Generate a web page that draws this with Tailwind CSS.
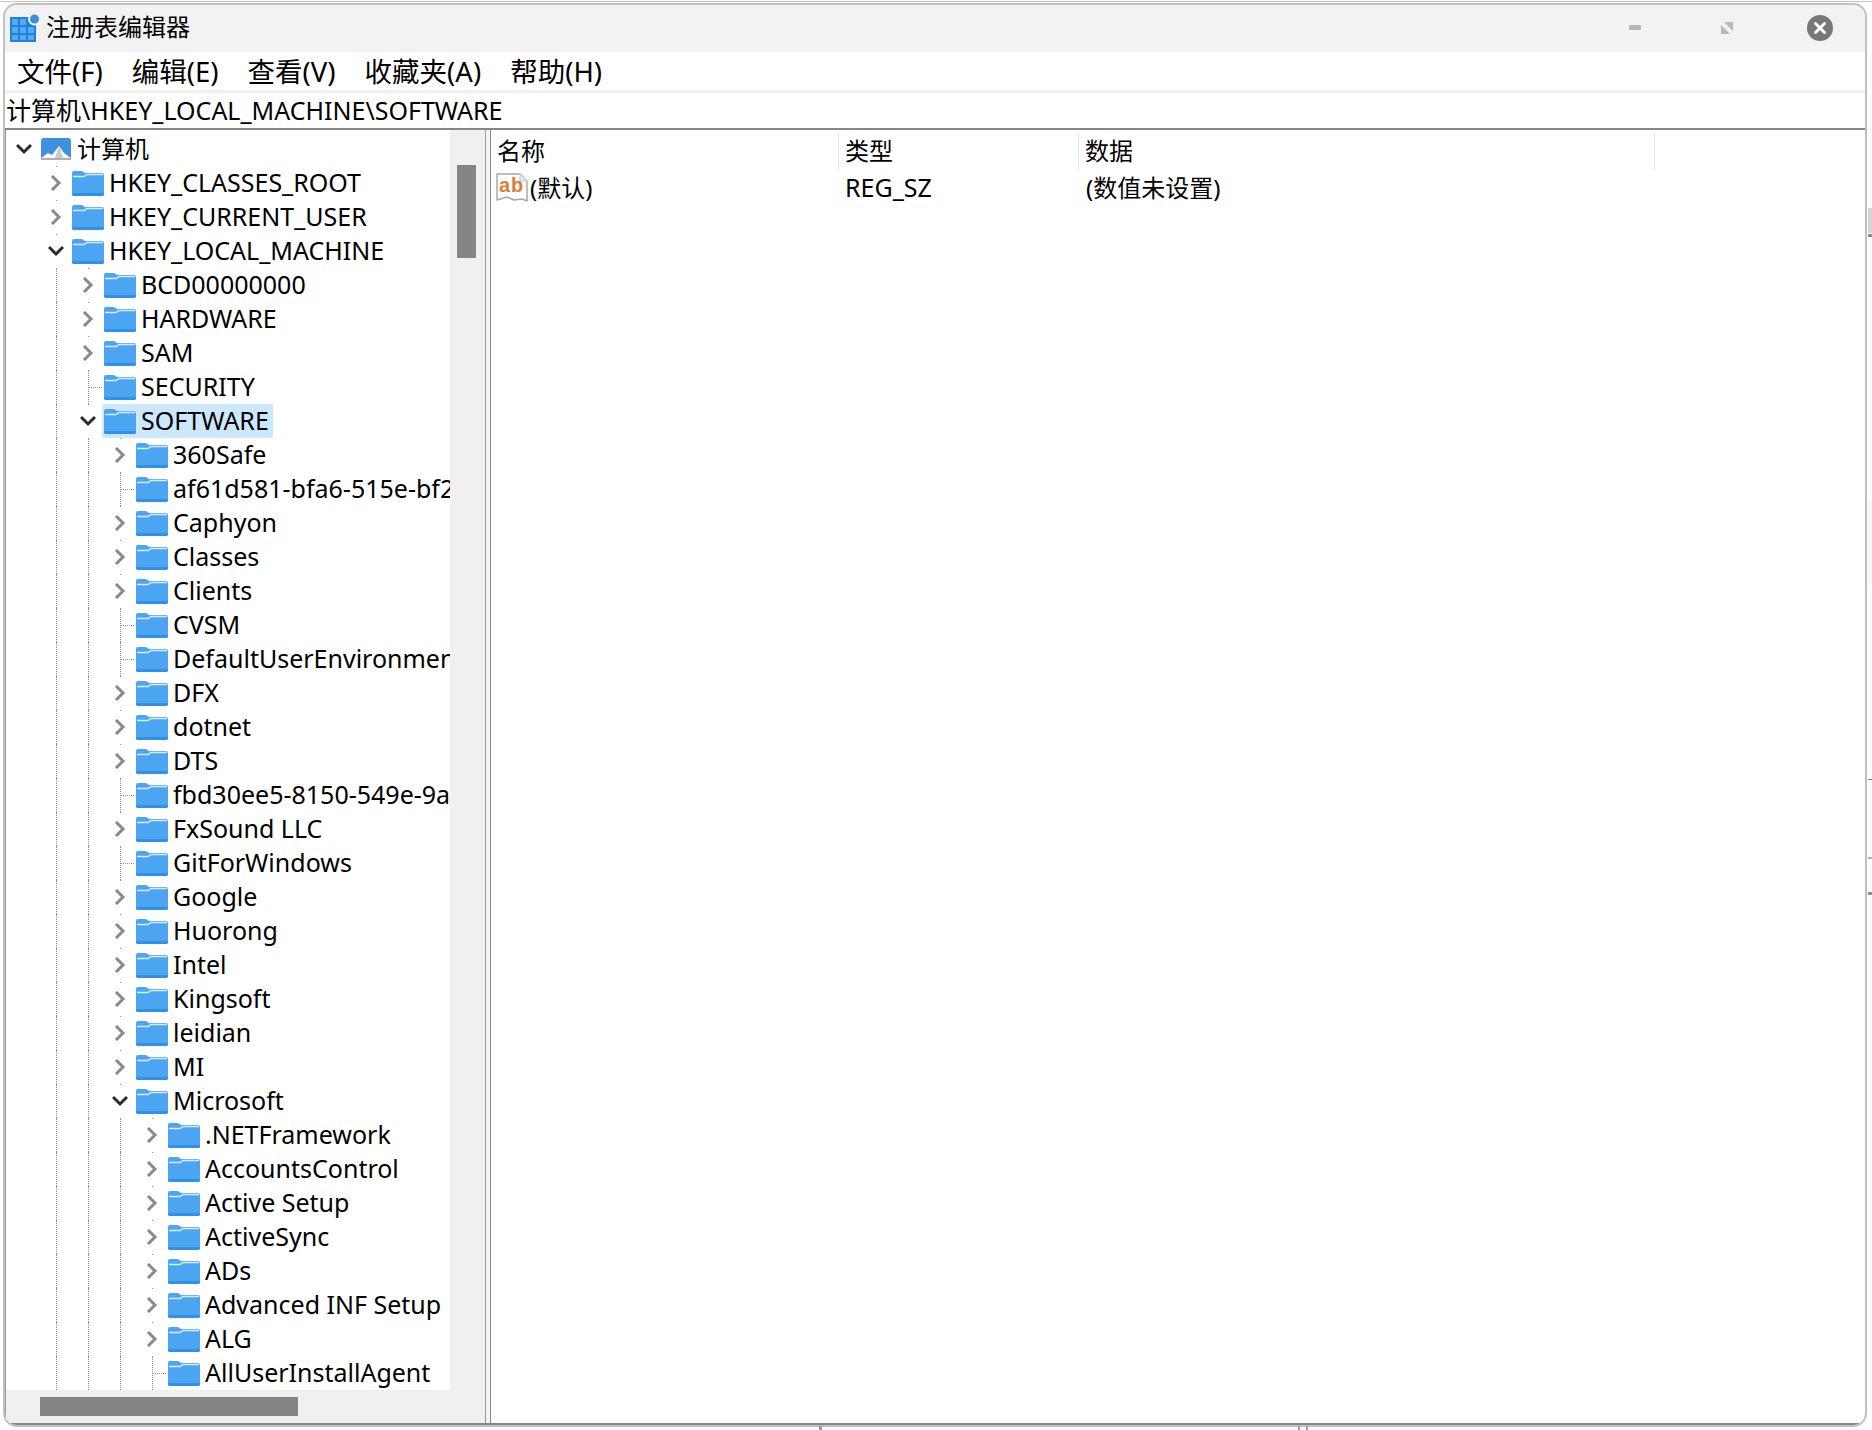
<!DOCTYPE html>
<html lang="zh-CN">
<head>
    <meta charset="UTF-8">
    <title>注册表编辑器</title>
    <script src="https://cdn.jsdelivr.net/npm/@tailwindcss/browser@4"></script>
</head>
<body class="bg-white">
    <svg class="hidden">
        <symbol id="folder" viewBox="0 0 32 26">
            <path d="M0 3a2 2 0 0 1 2-2h8l3 2h17a2 2 0 0 1 2 2v19a2 2 0 0 1-2 2H2a2 2 0 0 1-2-2z" fill="#4ba5f0"/>
            <path d="M0 24v-1h32v1a2 2 0 0 1-2 2H2a2 2 0 0 1-2-2z" fill="#2f90e6"/>
            <path d="M1 6.500h11l3-2h16" fill="none" stroke="#d9ecfb" stroke-width="1.500"/>
        </symbol>
        <symbol id="more" viewBox="0 0 16 16">
            <path d="M4 1l7 7-7 7" fill="none" stroke="#8a8a8a" stroke-width="3"/>
        </symbol>
        <symbol id="less" viewBox="0 0 16 16">
            <path d="M1 4l7 7 7-7" fill="none" stroke="#2b2b2b" stroke-width="3"/>
        </symbol>
    </svg>

    <div class="relative w-[1872px] h-[1430px] overflow-hidden font-['Noto_Sans','Noto_Sans_CJK_SC',sans-serif] text-[25px] text-black">
        <div class="h-[2px] border-b border-[#c4c4c4]"></div>
        <div class="ml-[3px] mt-[1px] w-[1864px] h-[1424px] flex flex-col border-2 border-[#c0c0c0] rounded-[14px] overflow-hidden bg-white">
            <!-- title bar -->
            <div class="h-[47px] shrink-0 flex items-center bg-[#f2f2f2] pl-[4px]">
                <svg class="w-[30px] h-[28px] -mt-[2px]" viewBox="0 0 30 28">
                    <rect x="1" y="3" width="26" height="25" fill="#1f83dc"/>
                    <path d="M3 5h6v6H3zM11 5h6v6h-6zM3 13h6v6H3zM11 13h6v6h-6zM19 13h6v6h-6zM3 21h6v5H3zM11 21h6v5h-6zM19 21h6v5h-6z" fill="#54abf0"/>
                    <circle cx="25.500" cy="5" r="6.500" fill="#f2f2f2"/>
                    <circle cx="25.500" cy="5" r="4.500" fill="#3b8fd8"/>
                </svg>
                <span class="ml-[7px] text-[24px] -mt-[3px]">注册表编辑器</span>
                <div class="ml-auto flex items-center -mt-[2px]">
                    <div class="w-[12px] h-[5px] bg-[#b5b5b5] rounded-[1px]"></div>
                    <svg class="ml-[80px] w-[12px] h-[12px]" viewBox="0 0 12 12"><path d="M3 0h9v9zM0 3l9 9H0z" fill="#b8b8b8"/></svg>
                    <svg class="ml-[74px] mr-[32px] w-[26px] h-[26px]" viewBox="0 0 26 26">
                        <circle cx="13" cy="13" r="13" fill="#787878"/>
                        <path d="M8.500 8.500l9 9M17.500 8.500l-9 9" stroke="#fff" stroke-width="3" stroke-linecap="round"/>
                    </svg>
                </div>
            </div>
            <!-- menu -->
            <div class="h-[38px] shrink-0 flex items-center pl-[12px] gap-[29px] text-[27.500px] pt-[1px]">
                <span>文件(F)</span><span>编辑(E)</span><span>查看(V)</span><span>收藏夹(A)</span><span>帮助(H)</span>
            </div>
            <div class="h-[3px] shrink-0 bg-[#f0f0f0]"></div>
            <!-- address -->
            <div class="h-[35px] shrink-0 flex items-center pl-[1px]"><span class="text-[25px]">计算机</span><span class="text-[25px]">\HKEY_LOCAL_MACHINE\SOFTWARE</span></div>
            <div class="h-[2px] shrink-0 bg-[#868686]"></div>
            <!-- panes -->
            <div class="flex-1 min-h-0 flex border-b-2 border-[#868686]">
                <div class="w-[481px] shrink-0 flex flex-col border-x border-x-[#9a9a9a]">
                    <div class="flex-1 min-h-0 flex">
                        <div id="tree" class="w-[444px] overflow-hidden pt-[2px]"></div>
                        <div class="flex-1 bg-[#f0f0f0] pt-[35px] pl-[7px]">
                            <div class="w-[19px] h-[93px] bg-[#858585]"></div>
                        </div>
                    </div>
                    <div class="h-[33px] shrink-0 bg-[#f0f0f0] pl-[34px] pt-[7px]">
                        <div class="w-[258px] h-[19px] bg-[#858585]"></div>
                    </div>
                </div>
                <div class="w-[4px] shrink-0 bg-[#f4f4f4]"></div>
                <div class="flex-1 border-l border-[#8a8a8a] flex flex-col text-[24px]">
                    <div class="h-[40px] shrink-0 flex pt-[2px]">
                        <div class="w-[348px] flex items-center pl-[6px] border-r border-[#e3e3e3]">名称</div>
                        <div class="w-[240px] flex items-center pl-[6px] border-r border-[#e3e3e3]">类型</div>
                        <div class="w-[576px] flex items-center pl-[6px] border-r border-[#e3e3e3]">数据</div>
                    </div>
                    <div class="h-[34px] flex items-center pt-[2px]">
                        <div class="w-[348px] flex items-center pl-[5px]">
                            <svg class="w-[32px] h-[30px] shrink-0" viewBox="0 0 32 30">
                                <path d="M1 1h23l7 7v20l-5-2-8 1-7-3-10 3z" fill="#fff" stroke="#a8a8a8" stroke-width="1.500" stroke-linejoin="round"/>
                                <path d="M24 1v7h7" fill="#e8e8e8" stroke="#c8c8c8"/>
                                <text x="3" y="19" font-family="Liberation Sans" font-size="20" font-weight="700" fill="#d8803a" letter-spacing="1">ab</text>
                            </svg>
                            <span class="ml-[2px]">(默认)</span>
                        </div>
                        <div class="w-[240px] pl-[6px] text-[25px]">REG_SZ</div>
                        <div class="pl-[7px]">(数值未设置)</div>
                    </div>
                </div>
            </div>
        </div>
        <!-- bits of the windows behind -->
        <div class="absolute left-[1868px] top-[208px] w-[4px] h-[25px] bg-[#d4d4d4]"></div>
        <div class="absolute left-[1868px] top-[234px] w-[4px] h-[3px] bg-[#8c8c8c]"></div>
        <div class="absolute left-[1868px] top-[500px] w-[4px] h-[85px] bg-[#f6f6f6]"></div>
        <div class="absolute left-[1868px] top-[779px] w-[4px] h-[1px] bg-[#4a86c0]"></div>
        <div class="absolute left-[1868px] top-[857px] w-[4px] h-[2px] bg-[#b0b0b0]"></div>
        <div class="absolute left-[1868px] top-[892px] w-[4px] h-[3px] bg-[#8c8c8c]"></div>
        <div class="absolute left-[819px] top-[1426px] w-[3px] h-[4px] bg-[#9a9a9a]"></div>
        <div class="absolute left-[1298px] top-[1426px] w-[2px] h-[4px] bg-[#9a9a9a]"></div>
        <div class="absolute left-[1306px] top-[1426px] w-[2px] h-[4px] bg-[#9a9a9a]"></div>
    </div>

    <script>
    // name, level, state: o = expanded, c = collapsed, l = leaf
    const rows = [
        ['计算机', 0, 'o'],
        ['HKEY_CLASSES_ROOT', 1, 'c'], ['HKEY_CURRENT_USER', 1, 'c'], ['HKEY_LOCAL_MACHINE', 1, 'o'],
        ['BCD00000000', 2, 'c'], ['HARDWARE', 2, 'c'], ['SAM', 2, 'c'], ['SECURITY', 2, 'l'], ['SOFTWARE', 2, 'o'],
        ['360Safe', 3, 'c'], ['af61d581-bfa6-515e-bf2b-4a1c9d3e7f10', 3, 'l'], ['Caphyon', 3, 'c'], ['Classes', 3, 'c'],
        ['Clients', 3, 'c'], ['CVSM', 3, 'l'], ['DefaultUserEnvironment', 3, 'l'], ['DFX', 3, 'c'], ['dotnet', 3, 'c'],
        ['DTS', 3, 'c'], ['fbd30ee5-8150-549e-9a3c-6d2e1f0b7a42', 3, 'l'], ['FxSound LLC', 3, 'c'], ['GitForWindows', 3, 'l'],
        ['Google', 3, 'c'], ['Huorong', 3, 'c'], ['Intel', 3, 'c'], ['Kingsoft', 3, 'c'], ['leidian', 3, 'c'], ['MI', 3, 'c'],
        ['Microsoft', 3, 'o'],
        ['.NETFramework', 4, 'c'], ['AccountsControl', 4, 'c'], ['Active Setup', 4, 'c'], ['ActiveSync', 4, 'c'], ['ADs', 4, 'c'],
        ['Advanced INF Setup', 4, 'c'], ['ALG', 4, 'c'], ['AllUserInstallAgent', 4, 'l']
    ];

    const tree = document.getElementById('tree');
    rows.forEach(([name, level, state]) => {
        const row = document.createElement('div');
        row.className = 'relative h-[34px] flex items-center whitespace-nowrap';
        const chevronLeft = 10 + 32 * level;
        let html = '';

        // guide lines of the ancestors that go on below this row
        for (let g = 1; g < level; g++) {
            html += `<span class="absolute top-0 h-[34px] border-l border-dotted border-[#8f8f8f]" style="left:${18 + 32 * g}px"></span>`;
        }
        if (level > 0) {
            const x = 18 + 32 * level;
            if (state === 'l') {
                html += `<span class="absolute top-0 h-[34px] border-l border-dotted border-[#8f8f8f]" style="left:${x}px"></span>`;
                html += `<span class="absolute top-[17px] w-[14px] border-t border-dotted border-[#8f8f8f]" style="left:${x}px"></span>`;
            } else {
                html += `<span class="absolute top-0 w-[1px] h-[1px] bg-[#8f8f8f]" style="left:${x}px"></span>`;
            }
        }

        html += `<span class="absolute w-[16px] h-[16px]" style="left:${chevronLeft}px">`;
        if (state !== 'l') html += `<svg class="w-[16px] h-[16px]"><use href="#${state === 'o' ? 'less' : 'more'}"/></svg>`;
        html += '</span>';

        const iconLeft = 34 + 32 * level;
        if (level === 0) {
            html += `<svg class="absolute w-[30px] h-[22px] left-[35px]" viewBox="0 0 30 22">
                <path d="M0 20V3a3 3 0 0 1 3-3h24a3 3 0 0 1 3 3v17z" fill="#3e90e0"/>
                <path d="M0 20l7-5 4 2 7-9 5 7 7 5z" fill="#fff"/>
                <path d="M14 20l4-12 4 12z" fill="#c9c9c9"/>
                <rect y="20" width="30" height="2" fill="#b0b0b0"/>
            </svg><span class="absolute left-[71px] text-[24px]">${name}</span>`;
        } else if (name === 'SOFTWARE') {
            html += `<span class="absolute h-[34px] flex items-center bg-[#cce8ff] rounded-[2px] pl-[2px] pr-[4px]" style="left:${iconLeft - 2}px">
                <svg class="w-[32px] h-[26px]"><use href="#folder"/></svg><span class="ml-[5px]">${name}</span></span>`;
        } else {
            html += `<span class="absolute flex items-center" style="left:${iconLeft}px">
                <svg class="w-[32px] h-[26px] shrink-0"><use href="#folder"/></svg><span class="ml-[5px]">${name}</span></span>`;
        }
        row.innerHTML = html;
        tree.appendChild(row);
    });
    </script>
</body>
</html>
